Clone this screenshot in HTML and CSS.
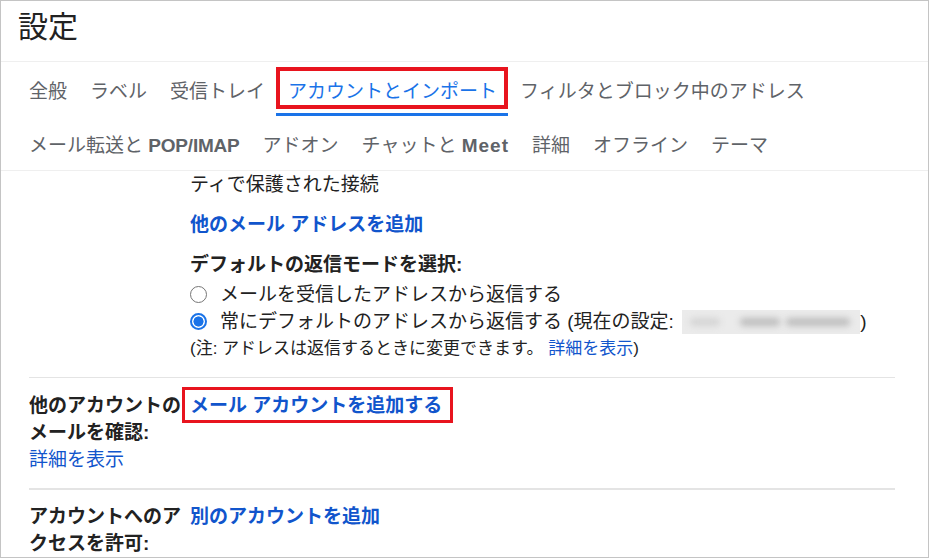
FILE: index.html
```html
<!DOCTYPE html>
<html lang="ja">
<head>
<meta charset="utf-8">
<title>設定</title>
<link rel="stylesheet" href="styles.css">
</head>
<body>
<div class="frame">
  <h1 class="title">設定</h1>
  <nav class="tabs">
    <div class="tab-row">
      <span class="tab"><span class="tab-label">全般</span></span>
      <span class="tab"><span class="tab-label">ラベル</span></span>
      <span class="tab"><span class="tab-label">受信トレイ</span></span>
      <span class="tab active"><span class="tab-label">アカウントとインポート</span><span class="mark"></span></span>
      <span class="tab"><span class="tab-label">フィルタとブロック中のアドレス</span></span>
    </div>
    <div class="tab-row">
      <span class="tab"><span class="tab-label">メール転送と <b class="latin">POP/IMAP</b></span></span>
      <span class="tab"><span class="tab-label">アドオン</span></span>
      <span class="tab"><span class="tab-label">チャットと <b class="latin wide">Meet</b></span></span>
      <span class="tab"><span class="tab-label">詳細</span></span>
      <span class="tab"><span class="tab-label">オフライン</span></span>
      <span class="tab"><span class="tab-label">テーマ</span></span>
    </div>
  </nav>
  <div class="content">
    <div class="section first">
      <div class="label"></div>
      <div class="value">
        <div class="line">ティで保護された接続</div>
        <div class="line gap"><a class="link bold">他のメール アドレスを追加</a></div>
        <div class="line gap bold">デフォルトの返信モードを選択:</div>
        <div class="line radio-line first-radio"><span class="radio"></span><span>メールを受信したアドレスから返信する</span></div>
        <div class="line radio-line"><span class="radio checked"></span><span>常にデフォルトのアドレスから返信する (現在の設定: <span class="blurred"><span class="blob b1"></span><span class="blob b2"></span><span class="blob b3"></span></span>)</span></div>
        <div class="line note">(注: アドレスは返信するときに変更できます。 <a class="link">詳細を表示</a>)</div>
      </div>
    </div>
    <div class="section">
      <div class="label">
        <div class="bold">他のアカウントのメールを確認:</div>
        <a class="link">詳細を表示</a>
      </div>
      <div class="value">
        <a class="link bold boxed">メール アカウントを追加する</a>
      </div>
    </div>
    <div class="section thick">
      <div class="label">
        <div class="bold">アカウントへのアクセスを許可:</div>
      </div>
      <div class="value">
        <a class="link bold">別のアカウントを追加</a>
      </div>
    </div>
  </div>
</div>
</body>
</html>
```
FILE: styles.css
```css
* { box-sizing: border-box; }
html, body { margin: 0; padding: 0; background: #fff; }
body {
  font-family: "Liberation Sans", "Noto Sans CJK JP", sans-serif;
  color: #222;
}
.frame {
  width: 929px;
  height: 558px;
  border: 1px solid #c4c4c4;
  overflow: hidden;
}
.title {
  margin: 0;
  padding: 8px 0 16px 17px;
  font-size: 30px;
  line-height: 36px;
  font-weight: normal;
  color: #222;
  border-bottom: 1px solid #efefef;
}
.tabs {
  padding-left: 16px;
  border-bottom: 1px solid #efefef;
}
.tab-row {
  display: flex;
  height: 54px;
}
.tab {
  position: relative;
  display: flex;
  align-items: center;
  padding: 0 11px 0 12px;
  font-size: 19px;
  color: #5f6368;
}
.tab-label { white-space: pre; }
.latin { font-weight: bold; letter-spacing: -0.2px; }
.latin.wide { letter-spacing: 1px; }
.tab.active {
  color: #1a73e8;
  border-bottom: 3px solid #1a73e8;
  padding-top: 3px;
}
.tab .mark {
  position: absolute;
  left: 0;
  right: 0;
  top: 5px;
  height: 42px;
  border: 4px solid #e8141e;
}
.content {
  padding: 0 33px 0 28px;
}
.section {
  display: flex;
  padding: 14px 0 15px;
  border-top: 1px solid #e4e4e4;
  font-size: 19px;
  line-height: 27px;
}
.section.first {
  border-top: 0;
  padding-top: 0;
}
.section.thick {
  border-top: 2px solid #e4e4e4;
  padding-top: 13px;
}
.label {
  width: 161px;
  flex: none;
}
.value { flex: 1; }
.bold { font-weight: bold; }
.link {
  color: #1155cc;
  text-decoration: none;
  display: inline-block;
}
.label .link { display: block; }
.line.gap { margin-top: 13px; }
.radio-line {
  display: flex;
  align-items: center;
  white-space: pre;
}
.first-radio { margin-top: 3px; }
.radio {
  width: 17px;
  height: 17px;
  border: 1.6px solid #767676;
  border-radius: 50%;
  margin-right: 13px;
  flex: none;
}
.radio.checked {
  border: 2px solid #1a73e8;
  background: radial-gradient(circle, #1a73e8 0 4.8px, #fff 5.3px);
}
.blurred {
  position: relative;
  display: inline-block;
  width: 178px;
  height: 24px;
  vertical-align: -6px;
  background: #ebebeb;
  overflow: hidden;
  margin-left: 3px;
}
.blob {
  position: absolute;
  top: 8px;
  height: 8px;
  background: #bdbdbd;
  border-radius: 4px;
  filter: blur(3px);
}
.b1 { left: 8px; width: 30px; background: #d4d4d4; }
.b2 { left: 58px; width: 40px; }
.b3 { left: 104px; width: 64px; }
.note {
  font-size: 17px;
  line-height: 27px;
}
.boxed { position: relative; }
.boxed::after {
  content: "";
  position: absolute;
  left: -8px;
  right: -11px;
  top: -5px;
  bottom: -4px;
  border: 3.5px solid #e8141e;
}
```
